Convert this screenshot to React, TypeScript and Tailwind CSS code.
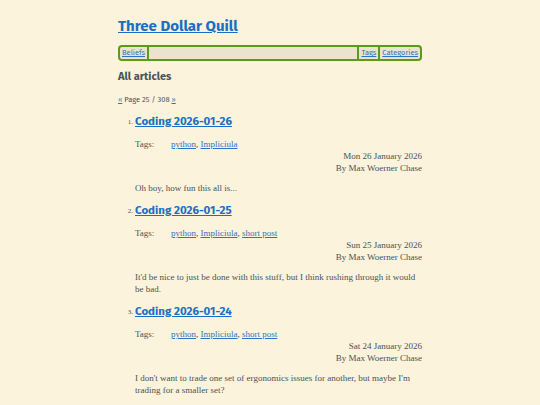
const sans = "[font-family:'Fira_Sans','Lato','Noto_Sans',sans-serif]";
const serif = "[font-family:'Liberation_Serif','DejaVu_Serif',serif]";

type Article = {
  title: string;
  tags: string[];
  date: string;
  excerpt: string;
};

const articles: Article[] = [
  {
    title: "Coding 2026-01-26",
    tags: ["python", "Impliciula"],
    date: "Mon 26 January 2026",
    excerpt: "Oh boy, how fun this all is...",
  },
  {
    title: "Coding 2026-01-25",
    tags: ["python", "Impliciula", "short post"],
    date: "Sun 25 January 2026",
    excerpt:
      "It'd be nice to just be done with this stuff, but I think rushing through it would be bad.",
  },
  {
    title: "Coding 2026-01-24",
    tags: ["python", "Impliciula", "short post"],
    date: "Sat 24 January 2026",
    excerpt:
      "I don't want to trade one set of ergonomics issues for another, but maybe I'm trading for a smaller set?",
  },
];

function ArticleItem({ a, n }: { a: Article; n: number }) {
  return (
    <li className="flex">
      <span className={`${serif} w-[17px] shrink-0 text-right pr-[2px] text-[7px] leading-[16px] mt-[1px] text-[#4a5258]`}>
        {n}.
      </span>
      <div className="flex-1">
        <h3 className={`${sans} text-[11.5px] font-bold leading-[16px]`}>
          <a href="#" className="text-[#1a6fc4] underline">
            {a.title}
          </a>
        </h3>
        <div className={`${serif} text-[9px] text-[#4a5258] mt-[9px]`}>
          <div className="flex leading-[12px]">
            <span className="w-[36px]">Tags:</span>
            <span>
              {a.tags.map((t, i) => (
                <span key={t}>
                  <a href="#" className="text-[#2f74c0] underline">
                    {t}
                  </a>
                  {i < a.tags.length - 1 ? ", " : ""}
                </span>
              ))}
            </span>
          </div>
          <div className="text-right leading-[12px]">{a.date}</div>
          <div className="text-right leading-[12px]">By Max Woerner Chase</div>
          <p className="mt-[8px] leading-[12px] pr-[6px]">{a.excerpt}</p>
        </div>
        <div className="h-[8px]" />
      </div>
    </li>
  );
}

export default function App() {
  return (
    <div className="min-h-[405px] bg-[#fbf3dc]">
      <div className="w-[304px] pt-[15px] ml-[118px]">
        <h1 className={`${sans} text-[15px] font-bold leading-[22px]`}>
          <a href="#" className="text-[#1a6fc4] underline">
            Three Dollar Quill
          </a>
        </h1>
        <nav className={`${sans} mt-[8px] h-[16px] flex items-stretch border-2 border-[#5c9a1c] rounded-[4px] bg-[#ebe3cd] text-[7.5px]`}>
          <a href="#" className="px-[2px] flex items-center text-[#2f74c0] underline border-r-2 border-[#5c9a1c]">
            Beliefs
          </a>
          <div className="flex-1" />
          <a href="#" className="px-[2px] flex items-center text-[#2f74c0] underline border-l-2 border-[#5c9a1c]">
            Tags
          </a>
          <a href="#" className="px-[2px] flex items-center text-[#2f74c0] underline border-l-2 border-[#5c9a1c]">
            Categories
          </a>
        </nav>
        <h2 className={`${sans} mt-[8px] text-[11px] font-bold leading-[16px] text-[#4a5258]`}>
          All articles
        </h2>
        <div className={`${sans} mt-[8px] text-[7.5px] leading-[14px] text-[#4a5258]`}>
          <a href="#" className="text-[#2f74c0] underline">«</a> Page 25 / 308{" "}
          <a href="#" className="text-[#2f74c0] underline">»</a>
        </div>
        <ol className="mt-[6px]">
          {articles.map((a, i) => (
            <ArticleItem key={a.title} a={a} n={i + 1} />
          ))}
        </ol>
      </div>
    </div>
  );
}
